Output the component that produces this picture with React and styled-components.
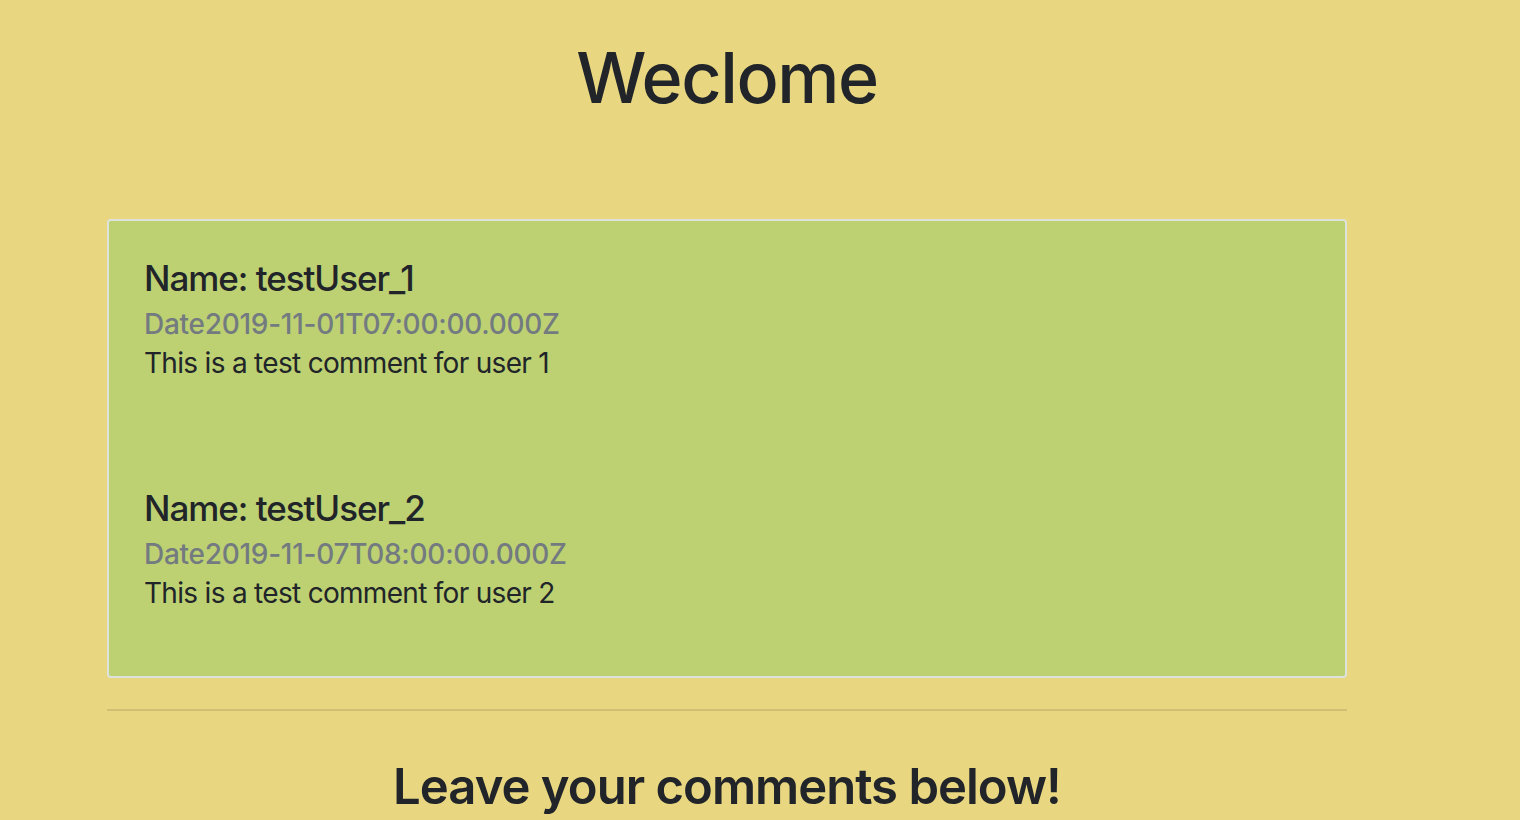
import React from 'react';
import styled, { createGlobalStyle } from 'styled-components';

const GlobalStyle = createGlobalStyle`
    html, body {
        margin: 0;
        padding: 0;
        background: #e9d680;
        font-family: Inter, "Noto Sans", sans-serif;
        color: #212529;
    }
`;

const Page = styled.div`
    width: 1240px;
    margin-left: 107px;
    padding-top: 36px;
    display: flex;
    flex-direction: column;
`;

const Title = styled.h1`
    margin: 0 0 99px;
    font-size: 70px;
    font-weight: 500;
    line-height: 84px;
    letter-spacing: -0.02em;
    text-align: center;
`;

const Card = styled.div`
    display: flex;
    flex-direction: column;
    background: #bdd173;
    border: 2px solid #dde2dc;
    border-radius: 4px;
`;

const CommentBody = styled.div`
    padding: 36px 35px 39px;
    &:last-child {
        padding-bottom: 34px;
    }
`;

const Name = styled.h5`
    margin: 0;
    font-size: 35px;
    font-weight: 500;
    line-height: 42px;
    letter-spacing: -0.03em;
`;

const DateLine = styled.h6`
    margin: 4px 0 0;
    font-size: 28px;
    font-weight: 500;
    line-height: 42px;
    letter-spacing: -0.01em;
    color: #737b80;
`;

const Text = styled.p`
    margin: -3px 0 28px;
    font-size: 28px;
    line-height: 42px;
    letter-spacing: -0.025em;
`;

const Divider = styled.hr`
    width: 100%;
    margin: 31px 0 46px;
    border: 0;
    border-top: 2px solid rgba(0, 0, 0, 0.1);
`;

const Subtitle = styled.h3`
    margin: 0;
    font-size: 49px;
    font-weight: 600;
    line-height: 59px;
    letter-spacing: -0.02em;
    text-align: center;
`;

const comments = [
    { id: 1, name: 'testUser_1', date: '2019-11-01T07:00:00.000Z', text: 'This is a test comment for user 1' },
    { id: 2, name: 'testUser_2', date: '2019-11-07T08:00:00.000Z', text: 'This is a test comment for user 2' },
];

export default function App() {
    return (
        <>
            <GlobalStyle />
            <Page>
                <Title>Weclome</Title>
                <Card>
                    {comments.map((c) => (
                        <CommentBody key={c.id}>
                            <Name>Name: {c.name}</Name>
                            <DateLine>Date{c.date}</DateLine>
                            <Text>{c.text}</Text>
                        </CommentBody>
                    ))}
                </Card>
                <Divider />
                <Subtitle>Leave your comments below!</Subtitle>
            </Page>
        </>
    );
}
